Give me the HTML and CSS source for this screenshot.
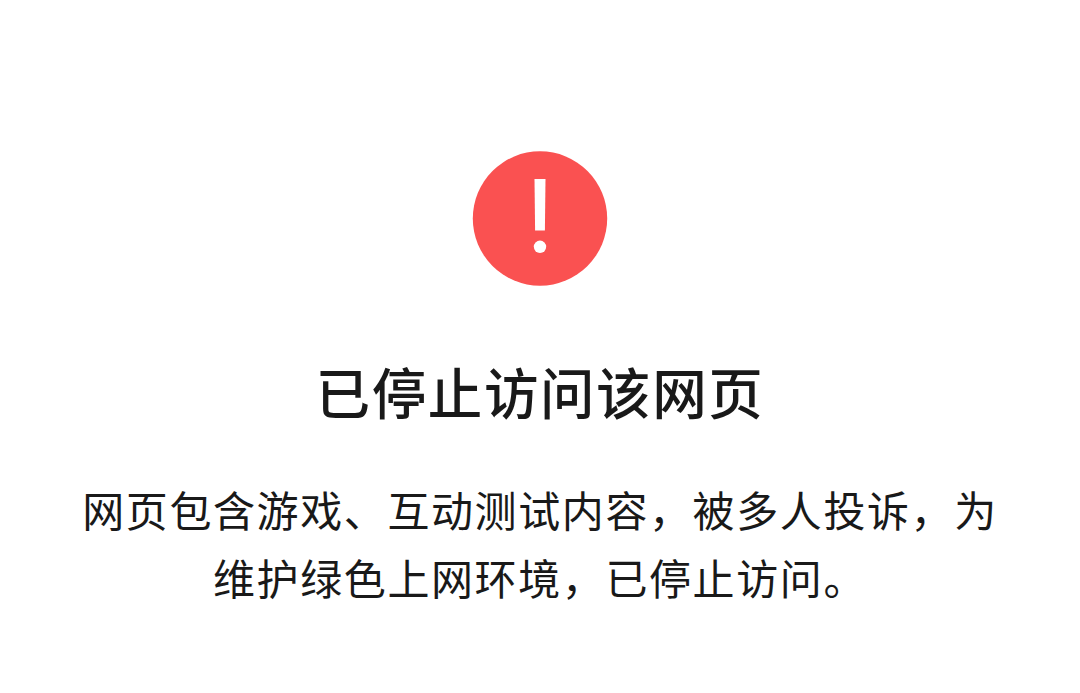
FILE: index.html
```html
<!DOCTYPE html>
<html lang="zh-CN">
<head>
<meta charset="utf-8">
<title>已停止访问该网页</title>
<link rel="stylesheet" href="styles.css">
</head>
<body>
<main class="notice">
  <svg class="notice-icon" viewBox="0 0 134 135" aria-hidden="true">
    <circle cx="67" cy="67.5" r="67.2" fill="#fa5151"/>
    <path d="M61.5 28h11l-.6 51.5h-9.8z" fill="#fff"/>
    <circle cx="67" cy="95.8" r="6.2" fill="#fff"/>
  </svg>
  <h1 class="notice-title">已停止访问该网页</h1>
  <p class="notice-text">网页包含游戏、互动测试内容，被多人投诉，为<br>维护绿色上网环境，已停止访问。</p>
</main>
</body>
</html>
```
FILE: styles.css
```css
body {
  margin: 0;
  background: #fff;
  color: #191919;
  font-family: "Noto Sans CJK SC", sans-serif;
}
.notice {
  display: flex;
  flex-direction: column;
  align-items: center;
  padding-top: 151px;
}
.notice-icon {
  display: block;
  width: 134px;
  height: 135px;
  overflow: visible;
}
.notice-title {
  margin: 65px 0 0;
  font-size: 54.5px;
  font-weight: 500;
  line-height: 80px;
  letter-spacing: 1.6px;
}
.notice-text {
  margin: 44px 0 0;
  font-size: 42px;
  line-height: 68px;
  letter-spacing: 1.6px;
  text-align: center;
  white-space: nowrap;
}
```
